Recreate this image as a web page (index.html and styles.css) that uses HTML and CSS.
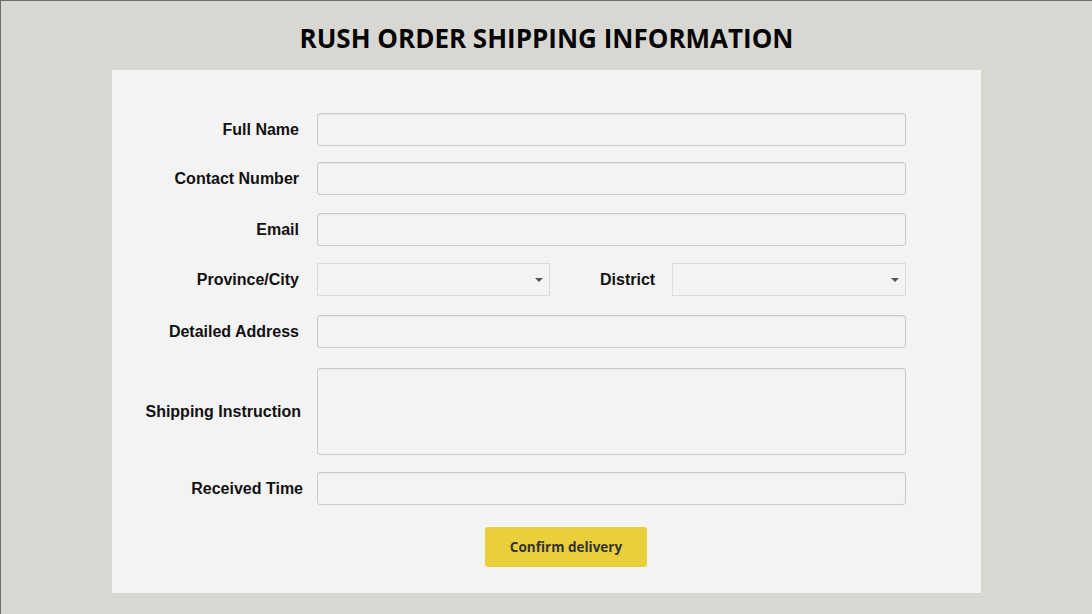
FILE: index.html
```html
<!DOCTYPE html>
<html>
<head>
<meta charset="utf-8">
<link rel="stylesheet" href="styles.css">
</head>
<body>
<div class="page">
  <h1 class="title">RUSH ORDER SHIPPING INFORMATION</h1>
  <form class="card">
    <div class="row">
      <label class="label">Full Name</label>
      <input class="field" type="text">
    </div>
    <div class="row row-contact">
      <label class="label">Contact Number</label>
      <input class="field" type="text">
    </div>
    <div class="row row-email">
      <label class="label">Email</label>
      <input class="field" type="text">
    </div>
    <div class="row row-province">
      <label class="label">Province/City</label>
      <div class="split">
        <div class="select"><span class="caret"></span></div>
        <label class="label label-inline">District</label>
        <div class="select"><span class="caret"></span></div>
      </div>
    </div>
    <div class="row row-address">
      <label class="label">Detailed Address</label>
      <input class="field" type="text">
    </div>
    <div class="row row-ship">
      <label class="label label-ship">Shipping Instruction</label>
      <textarea class="field area"></textarea>
    </div>
    <div class="row row-time">
      <label class="label label-time">Received Time</label>
      <input class="field" type="text">
    </div>
    <div class="actions">
      <button class="btn" type="button">Confirm delivery</button>
    </div>
  </form>
</div>
</body>
</html>
```

FILE: styles.css
```css
* { box-sizing: border-box; }
html, body { margin: 0; padding: 0; }
body {
  width: 1092px;
  height: 614px;
  background: #d8d7d2;
  border-top: 1px solid #6e6e6e;
  border-left: 1px solid #6e6e6e;
  overflow: hidden;
  font-family: "Liberation Sans", Arial, sans-serif;
}
.page {
  display: flex;
  flex-direction: column;
  align-items: center;
}
.title {
  margin: 0;
  height: 69px;
  padding-top: 19px;
  font-family: "Open Sans", sans-serif;
  font-weight: 700;
  font-size: 26px;
  line-height: 36px;
  color: #050505;
  letter-spacing: 0;
}
.card {
  width: 869px;
  height: 523px;
  background: #f3f3f3;
  padding: 43px 75px 0 0;
  display: flex;
  flex-direction: column;
}
.row {
  display: grid;
  grid-template-columns: 187px 589px;
  column-gap: 18px;
  align-items: center;
}
.row-contact { margin-top: 16px; }
.row-email { margin-top: 18px; }
.row-province { margin-top: 17px; }
.row-address { margin-top: 19px; }
.row-ship { margin-top: 20px; }
.row-time { margin-top: 17px; }
.label {
  text-align: right;
  font-weight: 700;
  font-size: 16px;
  color: #111;
  white-space: nowrap;
  padding-top: 1px;
}
.label-ship { margin-right: -2px; }
.label-time { margin-right: -4px; }
.field {
  display: block;
  width: 589px;
  height: 33px;
  margin: 0;
  border: 1px solid #cacaca;
  border-radius: 3px;
  background: #f3f3f3;
  box-shadow: inset 0 1px 1px rgba(0,0,0,0.05);
  font: inherit;
  outline: none;
}
.area {
  height: 87px;
  resize: none;
}
.split {
  display: flex;
  align-items: center;
  width: 589px;
}
.select {
  position: relative;
  width: 233px;
  height: 33px;
  border: 1px solid #dddddd;
  background: #f3f3f3;
}
.split .select:last-child { width: 234px; }
.caret {
  position: absolute;
  right: 6px;
  top: 14px;
  width: 0;
  height: 0;
  border-left: 4px solid transparent;
  border-right: 4px solid transparent;
  border-top: 4px solid #555;
}
.label-inline {
  width: 55px;
  margin: 0 17px 0 50px;
  text-align: left;
}
.actions {
  display: flex;
  justify-content: flex-start;
  margin-top: 22px;
  padding-left: 373px;
}
.btn {
  width: 162px;
  height: 40px;
  border: none;
  border-radius: 3px;
  background: #e9cf3b;
  color: #333;
  font-family: "Open Sans", sans-serif;
  font-weight: 700;
  font-size: 13.5px;
  padding: 0;
}
```
